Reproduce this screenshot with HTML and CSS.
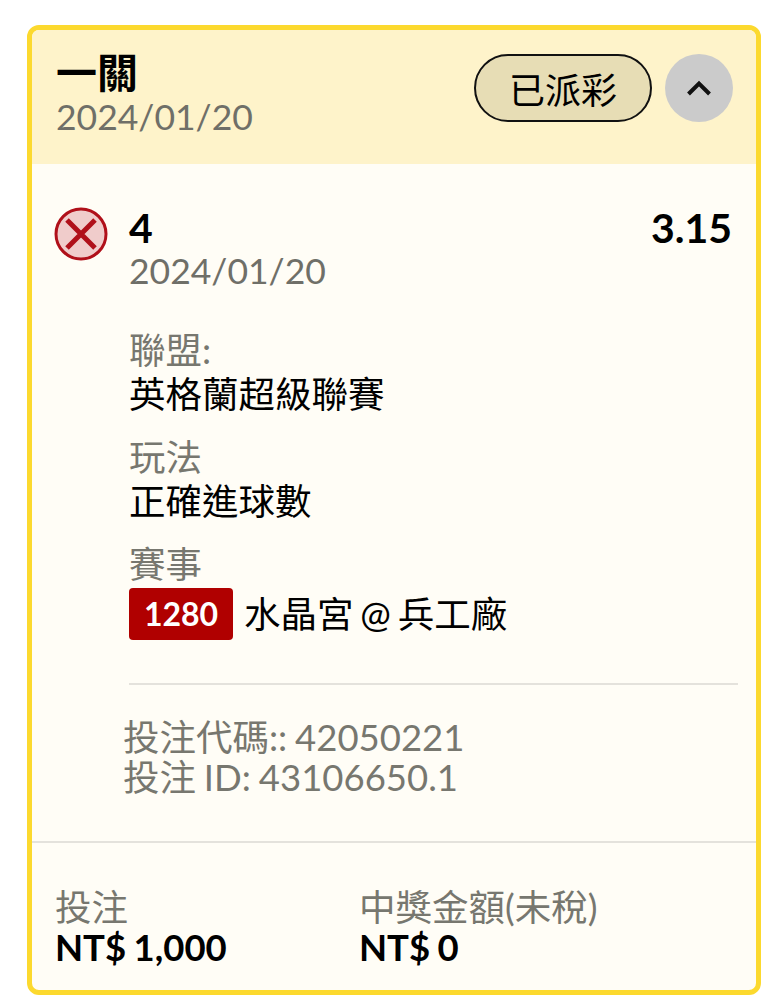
FILE: index.html
```html
<!DOCTYPE html>
<html lang="zh-Hant">
<head>
    <meta charset="UTF-8">
    <meta name="viewport" content="width=device-width, initial-scale=1.0">
    <title>一關</title>
    <link rel="stylesheet" href="styles.css">
</head>
<body>
    <div class="card">
        <div class="card-header">
            <div class="header-text">
                <div class="bet-type">一關</div>
                <div class="date">2024/01/20</div>
            </div>
            <div class="header-actions">
                <span class="status">已派彩</span>
                <button class="toggle" aria-label="收合">
                    <svg width="26" height="18" viewBox="0 0 26 18"><path d="M2.5 15 L13 4.5 L23.5 15" fill="none" stroke="#111" stroke-width="4"/></svg>
                </button>
            </div>
        </div>

        <div class="selection">
            <svg class="result-icon" width="54" height="54" viewBox="0 0 54 54">
                <circle cx="27" cy="27" r="25" fill="#f0cccb" stroke="#b0101a" stroke-width="3"/>
                <path d="M13 13 L41 41 M41 13 L13 41" stroke="#b0101a" stroke-width="5"/>
            </svg>
            <div class="selection-body">
                <div class="selection-top">
                    <div class="pick">4</div>
                    <div class="odds">3.15</div>
                </div>
                <div class="date">2024/01/20</div>

                <div class="field field-first">
                    <div class="label">聯盟:</div>
                    <div class="value">英格蘭超級聯賽</div>
                </div>
                <div class="field">
                    <div class="label">玩法</div>
                    <div class="value">正確進球數</div>
                </div>
                <div class="field">
                    <div class="label">賽事</div>
                    <div class="value match"><span class="match-no">1280</span>水晶宮 @ 兵工廠</div>
                </div>
            </div>
        </div>

        <div class="codes">
            <div>投注代碼:: 42050221</div>
            <div>投注 ID: 43106650.1</div>
        </div>

        <div class="totals">
            <div class="total total-stake">
                <div class="label">投注</div>
                <div class="amount">NT$ 1,000</div>
            </div>
            <div class="total">
                <div class="label">中獎金額(未稅)</div>
                <div class="amount">NT$ 0</div>
            </div>
        </div>
    </div>
</body>
</html>
```

FILE: styles.css
```css
body {
    margin: 0;
    padding: 25px 16px 5px 27px;
    background-color: #fff;
    font-family: Lato, "Noto Sans CJK TC", sans-serif;
    color: #000;
}
.card {
    height: 970px;
    box-sizing: border-box;
    border: 5px solid #fcd92e;
    border-radius: 12px;
    background-color: #fffdf6;
    overflow: hidden;
}
.card-header {
    display: flex;
    justify-content: space-between;
    height: 134px;
    box-sizing: border-box;
    padding: 21px 23px 0 24px;
    background-color: #fef3ca;
}
.bet-type {
    font-size: 41px;
    font-weight: 700;
    line-height: 44px;
}
.date {
    font-size: 35.5px;
    line-height: 44px;
    color: #6f6f68;
}
.header-actions {
    display: flex;
    gap: 13px;
    padding-top: 3px;
}
.status {
    display: flex;
    align-items: center;
    justify-content: center;
    width: 178px;
    height: 68px;
    box-sizing: border-box;
    border: 2.5px solid #111;
    border-radius: 34px;
    background-color: #e7ddb5;
    font-size: 36px;
}
.toggle {
    display: flex;
    align-items: center;
    justify-content: center;
    width: 68px;
    height: 68px;
    padding: 0;
    border: none;
    border-radius: 50%;
    background-color: #cbcbcb;
}
.selection {
    display: flex;
    gap: 21px;
    padding: 42px 18px 0 22px;
}
.result-icon {
    flex: none;
    margin-top: 1px;
}
.selection-body {
    flex: 1;
    border-bottom: 2px solid #e4e2dc;
    padding-bottom: 43px;
}
.selection-top {
    display: flex;
    justify-content: space-between;
    padding-right: 6px;
    font-size: 41px;
    font-weight: 700;
    line-height: 43px;
}
.field {
    margin-top: 19px;
}
.field-first {
    margin-top: 35px;
}
.label {
    font-size: 36.5px;
    line-height: 44px;
    color: #77776f;
}
.value {
    font-size: 36.5px;
    line-height: 44px;
}
.match {
    display: flex;
    align-items: center;
    height: 52px;
    margin-top: 2px;
    word-spacing: -2.5px;
}
.match-no {
    width: 104px;
    height: 52px;
    margin-right: 11px;
    border-radius: 4px;
    background-color: #b00000;
    color: #fff;
    font-size: 32px;
    font-weight: 700;
    line-height: 52px;
    text-align: center;
}
.codes {
    padding: 32px 0 44px 91px;
    border-bottom: 2px solid #e4e2dc;
    font-size: 36.5px;
    line-height: 40px;
    color: #77776f;
    word-spacing: -1.5px;
}
.totals {
    display: flex;
    padding: 44px 24px 0 23px;
}
.total-stake {
    width: 304px;
}
.totals .label {
    line-height: 40px;
}
.amount {
    font-size: 36.5px;
    font-weight: 700;
    line-height: 40px;
    word-spacing: -1.5px;
}
```
